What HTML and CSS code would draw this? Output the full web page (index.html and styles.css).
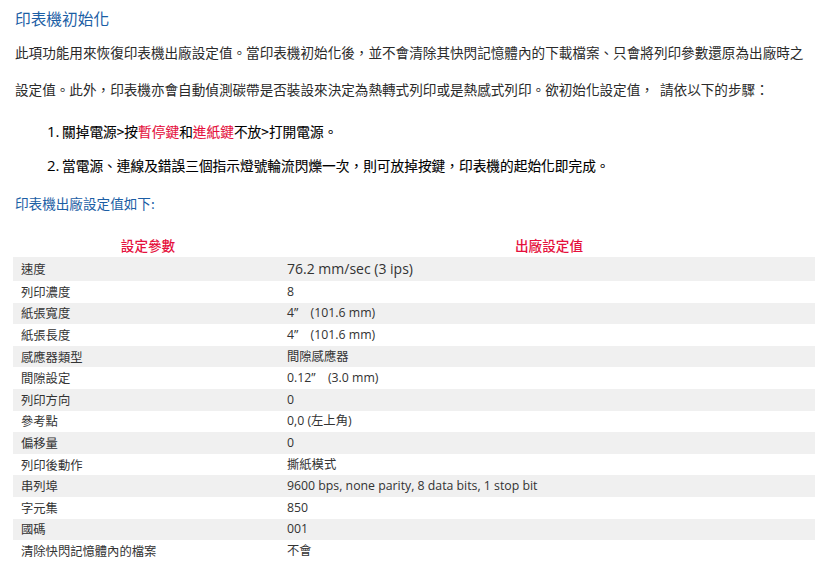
FILE: index.html
```html
<!DOCTYPE html>
<html lang="zh-Hant">
<head>
<meta charset="utf-8">
<title>印表機初始化</title>
<link rel="stylesheet" href="styles.css">
</head>
<body>
<div class="page">
  <h1 class="title">印表機初始化</h1>
  <p class="intro">此項功能用來恢復印表機出廠設定值。當印表機初始化後，並不會清除其快閃記憶體內的下載檔案、只會將列印參數還原為出廠時之設定值。此外，印表機亦會自動偵測碳帶是否裝設來決定為熱轉式列印或是熱感式列印。欲初始化設定值，&nbsp; 請依以下的步驟：</p>
  <ol class="steps">
    <li><span class="num">1.</span><span class="step-text">關掉電源&gt;按<span class="hl">暫停鍵</span>和<span class="hl">進紙鍵</span>不放&gt;打開電源。</span></li>
    <li><span class="num">2.</span><span class="step-text">當電源、連線及錯誤三個指示燈號輪流閃爍一次，則可放掉按鍵，印表機的起始化即完成。</span></li>
  </ol>
  <h2 class="subtitle">印表機出廠設定值如下:</h2>
  <table class="settings">
    <thead>
      <tr><th class="c1">設定參數</th><th class="c2">出廠設定值</th></tr>
    </thead>
    <tbody>
      <tr class="first"><td class="c1">速度</td><td class="c2 big">76.2 mm/sec (3 ips)</td></tr>
      <tr><td class="c1">列印濃度</td><td class="c2">8</td></tr>
      <tr><td class="c1">紙張寬度</td><td class="c2">4”　(101.6 mm)</td></tr>
      <tr><td class="c1">紙張長度</td><td class="c2">4”　(101.6 mm)</td></tr>
      <tr><td class="c1">感應器類型</td><td class="c2">間隙感應器</td></tr>
      <tr><td class="c1">間隙設定</td><td class="c2">0.12”　(3.0 mm)</td></tr>
      <tr><td class="c1">列印方向</td><td class="c2">0</td></tr>
      <tr><td class="c1">參考點</td><td class="c2">0,0 (左上角)</td></tr>
      <tr><td class="c1">偏移量</td><td class="c2">0</td></tr>
      <tr><td class="c1">列印後動作</td><td class="c2">撕紙模式</td></tr>
      <tr><td class="c1">串列埠</td><td class="c2">9600 bps, none parity, 8 data bits, 1 stop bit</td></tr>
      <tr><td class="c1">字元集</td><td class="c2">850</td></tr>
      <tr><td class="c1">國碼</td><td class="c2">001</td></tr>
      <tr><td class="c1">清除快閃記憶體內的檔案</td><td class="c2">不會</td></tr>
    </tbody>
  </table>
</div>
</body>
</html>
```
FILE: styles.css
```css
html, body {
  margin: 0;
  padding: 0;
  background: #ffffff;
}
body {
  font-family: "Open Sans", "Noto Sans CJK TC", sans-serif;
  color: #333333;
}
.page {
  padding: 8px 0 0 15px;
  width: 800px;
}
.title {
  margin: 0;
  font-family: "Noto Sans CJK TC", sans-serif;
  font-size: 15.7px;
  font-weight: 400;
  line-height: 22px;
  color: #1b5ea5;
}
.intro {
  margin: 3.5px 0 0 0;
  width: 796px;
  font-family: "Noto Sans CJK TC", sans-serif;
  font-size: 13.6px;
  line-height: 37px;
  color: #2a2a2a;
}
.steps {
  list-style: none;
  margin: 6.5px 0 0 0;
  padding: 0 0 0 32px;
}
.steps li {
  display: flex;
  align-items: baseline;
  line-height: 34px;
  color: #000000;
}
.num {
  font-family: "Open Sans", sans-serif;
  font-size: 15px;
  width: 15px;
  flex: none;
}
.step-text {
  font-family: "Noto Sans CJK TC", sans-serif;
  font-size: 13.7px;
  font-weight: 400;
  -webkit-text-stroke: 0.1px #000000;
}
.hl {
  color: #e5103c;
  -webkit-text-stroke-color: #e5103c;
}
.subtitle {
  margin: 10px 0 0 0;
  font-family: "Noto Sans CJK TC", sans-serif;
  font-size: 13.6px;
  font-weight: 400;
  line-height: 22px;
  color: #1b5ea5;
}
.settings {
  margin: 19px 0 0 -2px;
  width: 802px;
  border-collapse: collapse;
  table-layout: fixed;
}
.settings th {
  height: 24px;
  padding: 0;
  font-family: "Noto Sans CJK TC", sans-serif;
  font-size: 13.6px;
  font-weight: 500;
  color: #e5103c;
  text-align: center;
}
.settings th.c1 {
  width: 270px;
}
.settings td {
  height: 21.6px;
  padding: 0;
  font-size: 12.3px;
  line-height: 16px;
  color: #333333;
  vertical-align: middle;
}
.settings tbody tr:nth-child(odd) {
  background: #f0f0f0;
}
.settings tr.first td {
  height: 24px;
}
.settings td.c1 {
  padding-left: 8px;
  font-family: "Noto Sans CJK TC", sans-serif;
}
.settings td.c2 {
  padding-left: 4px;
  font-family: "Open Sans", "Noto Sans CJK TC", sans-serif;
}
.settings td.big {
  font-size: 14px;
}
```
